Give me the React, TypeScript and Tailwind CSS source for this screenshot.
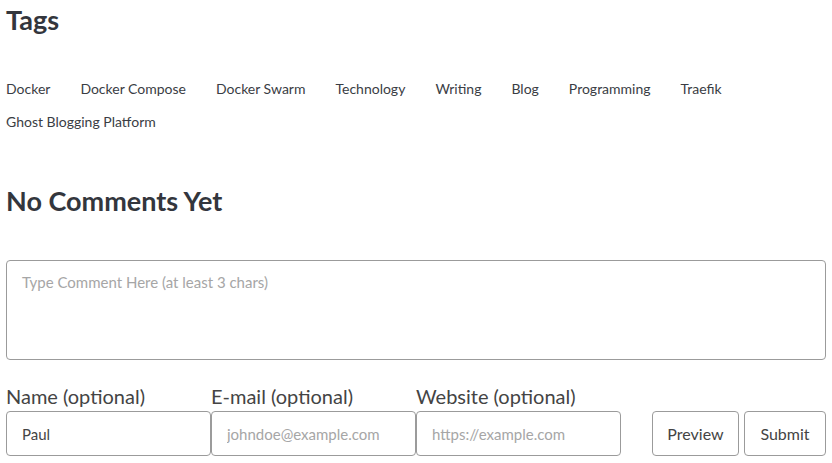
const tags = [
  "Docker",
  "Docker Compose",
  "Docker Swarm",
  "Technology",
  "Writing",
  "Blog",
  "Programming",
  "Traefik",
  "Ghost Blogging Platform",
];

export default function App() {
  return (
    <div className="min-h-screen bg-white px-[6px] text-[#33363d] font-['Lato','Noto_Sans',sans-serif]">
      {/* Tags */}
      <h2 className="pt-[2px] text-[27px] font-bold leading-[36px]">Tags</h2>
      <div className="mt-[34px] flex flex-wrap gap-x-[30px] text-[14px] leading-[33px]">
        {tags.map((tag) => (
          <a key={tag} href="#" className="text-[#3a3d44]">
            {tag}
          </a>
        ))}
      </div>

      {/* Comments */}
      <h2 className="mt-[45px] text-[27px] font-bold leading-[36px]">No Comments Yet</h2>
      <textarea
        className="mt-[41px] block h-[100px] w-full resize-none rounded-[4px] border border-[#9b9b9b] px-[15px] py-[10px] text-[15px] placeholder:text-[#a6a6a6]"
        placeholder="Type Comment Here (at least 3 chars)"
      />

      <div className="mt-[23px] flex items-end">
        <label className="flex w-[205px] flex-col">
          <span className="mb-[2px] text-[20px] leading-[26px] text-[#444]">Name (optional)</span>
          <input
            className="h-[45px] rounded-[4px] border border-[#9b9b9b] px-[15px] text-[15px] text-[#444] placeholder:text-[#a6a6a6]"
            defaultValue="Paul"
          />
        </label>
        <label className="flex w-[205px] flex-col">
          <span className="mb-[2px] text-[20px] leading-[26px] text-[#444]">E-mail (optional)</span>
          <input
            className="h-[45px] rounded-[4px] border border-[#9b9b9b] px-[15px] text-[15px] placeholder:text-[#a6a6a6]"
            placeholder="johndoe@example.com"
          />
        </label>
        <label className="flex w-[205px] flex-col">
          <span className="mb-[2px] text-[20px] leading-[26px] text-[#444]">Website (optional)</span>
          <input
            className="h-[45px] rounded-[4px] border border-[#9b9b9b] px-[15px] text-[15px] placeholder:text-[#a6a6a6]"
            placeholder="https://example.com"
          />
        </label>
        <div className="ml-auto flex gap-[5px]">
          <button className="h-[45px] w-[87px] rounded-[4px] border border-[#9b9b9b] text-[16px] text-[#444]">
            Preview
          </button>
          <button className="h-[45px] w-[82px] rounded-[4px] border border-[#9b9b9b] text-[16px] text-[#444]">
            Submit
          </button>
        </div>
      </div>
    </div>
  );
}
